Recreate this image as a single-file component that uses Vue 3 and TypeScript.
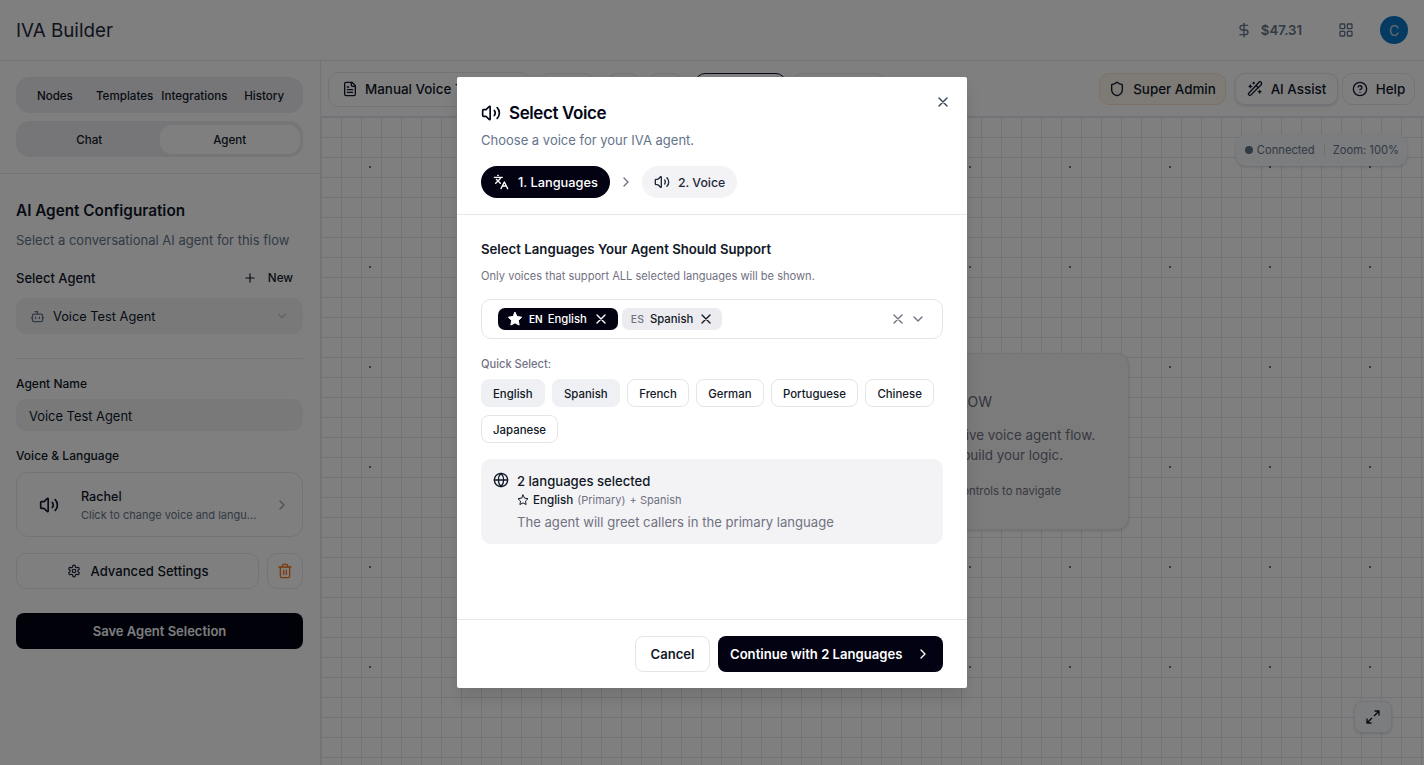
<template>
  <div class="page">
    <header class="topbar">
      <div class="brand">IVA Builder</div>
      <div class="top-right">
        <svg class="ic muted" width="16" height="16" viewBox="0 0 24 24"><line x1="12" y1="2" x2="12" y2="22" /><path d="M17 5H9.5a3.5 3.5 0 0 0 0 7h5a3.5 3.5 0 0 1 0 7H6" /></svg>
        <span class="balance">$47.31</span>
        <svg class="ic grid-ic" width="16" height="16" viewBox="0 0 24 24"><rect x="3" y="3" width="7" height="7" rx="1" /><rect x="14" y="3" width="7" height="7" rx="1" /><rect x="3" y="14" width="7" height="7" rx="1" /><rect x="14" y="14" width="7" height="7" rx="1" /></svg>
        <div class="avatar">C</div>
      </div>
    </header>

    <div class="body">
      <aside class="sidebar">
        <div class="tabs-block">
          <div class="seg seg-four">
            <span v-for="t in mainTabs" :key="t">{{ t }}</span>
          </div>
          <div class="seg seg-two">
            <span>Chat</span>
            <span class="on">Agent</span>
          </div>
        </div>

        <div class="config">
          <h2>AI Agent Configuration</h2>
          <p class="config-sub">Select a conversational AI agent for this flow</p>
          <div class="agent-head">
            <span>Select Agent</span>
            <span class="new">
              <svg class="ic" width="14" height="14" viewBox="0 0 24 24"><path d="M5 12h14M12 5v14" /></svg>
              New
            </span>
          </div>
          <div class="select">
            <svg class="ic" width="15" height="15" viewBox="0 0 24 24"><path d="M12 8V4H8" /><rect x="4" y="8" width="16" height="12" rx="2" /><path d="M2 14h2M20 14h2M15 13v2M9 13v2" /></svg>
            <span>Voice Test Agent</span>
            <svg class="ic chev faint" width="14" height="14" viewBox="0 0 24 24"><path d="m6 9 6 6 6-6" /></svg>
          </div>
          <div class="rule"></div>
          <label>Agent Name</label>
          <div class="name-input">Voice Test Agent</div>
          <label class="voice-label">Voice &amp; Language</label>
          <div class="voice-card">
            <svg class="ic" width="20" height="20" viewBox="0 0 24 24"><path :d="speakerBody" /><path d="M16 9a5 5 0 0 1 0 6M19.400 18.400a9 9 0 0 0 0-12.800" /></svg>
            <div class="voice-text">
              <b>Rachel</b>
              <small>Click to change voice and langu...</small>
            </div>
            <svg class="ic chev" width="16" height="16" viewBox="0 0 24 24"><path d="m9 18 6-6-6-6" /></svg>
          </div>
          <div class="adv-row">
            <div class="adv">
              <svg class="ic" width="14" height="14" viewBox="0 0 24 24"><path d="M12.2 2h-.4a2 2 0 0 0-2 2v.2a2 2 0 0 1-1 1.700l-.4.3a2 2 0 0 1-2 0l-.2-.1a2 2 0 0 0-2.700.7l-.2.4a2 2 0 0 0 .7 2.700l.2.1a2 2 0 0 1 1 1.700v.5a2 2 0 0 1-1 1.800l-.2.1a2 2 0 0 0-.7 2.700l.2.4a2 2 0 0 0 2.700.7l.2-.1a2 2 0 0 1 2 0l.4.3a2 2 0 0 1 1 1.700v.2a2 2 0 0 0 2 2h.4a2 2 0 0 0 2-2v-.2a2 2 0 0 1 1-1.700l.4-.3a2 2 0 0 1 2 0l.2.1a2 2 0 0 0 2.700-.7l.2-.4a2 2 0 0 0-.7-2.700l-.2-.1a2 2 0 0 1-1-1.800v-.5a2 2 0 0 1 1-1.700l.2-.1a2 2 0 0 0 .7-2.700l-.2-.4a2 2 0 0 0-2.700-.7l-.2.1a2 2 0 0 1-2 0l-.4-.3a2 2 0 0 1-1-1.700V4a2 2 0 0 0-2-2z" /><circle cx="12" cy="12" r="3" /></svg>
              Advanced Settings
            </div>
            <div class="trash">
              <svg class="ic" width="16" height="16" viewBox="0 0 24 24"><path d="M3 6h18M19 6v14a2 2 0 0 1-2 2H7a2 2 0 0 1-2-2V6M8 6V4a2 2 0 0 1 2-2h4a2 2 0 0 1 2 2v2M10 11v6M14 11v6" /></svg>
            </div>
          </div>
          <div class="save">Save Agent Selection</div>
        </div>
      </aside>

      <main class="workspace">
        <div class="toolbar">
          <div class="tool manual">
            <svg class="ic" width="16" height="16" viewBox="0 0 24 24"><path d="M15 2H6a2 2 0 0 0-2 2v16a2 2 0 0 0 2 2h12a2 2 0 0 0 2-2V7z" /><path d="M14 2v4a2 2 0 0 0 2 2h4M10 9H8M16 13H8M16 17H8" /></svg>
            Manual Voice Test
          </div>
          <div class="tool t2"></div>
          <div class="tool t3"></div>
          <div class="tool t4"></div>
          <div class="tool t5"></div>
          <div class="tool t6"></div>
          <div class="tool-right">
            <div class="tool admin">
              <svg class="ic" width="16" height="16" viewBox="0 0 24 24"><path d="M20 13c0 5-3.500 7.500-7.700 9a1 1 0 0 1-.6 0C7.500 20.500 4 18 4 13V6a1 1 0 0 1 1-1c2 0 4.500-1.200 6.200-2.700a1.200 1.200 0 0 1 1.600 0C14.500 3.800 17 5 19 5a1 1 0 0 1 1 1z" /></svg>
              Super Admin
            </div>
            <div class="tool assist">
              <svg class="ic" width="16" height="16" viewBox="0 0 24 24"><path d="m21.600 2.400-1.200-1.200a1.200 1.200 0 0 0-1.700 0L2.400 18.700a1.200 1.200 0 0 0 0 1.700l1.200 1.200a1.200 1.200 0 0 0 1.700 0L21.600 5.300a1.200 1.200 0 0 0 0-1.700zM14 7l3 3M5 6v4M19 14v4M10 2v2M7 8H3M21 16h-4M11 3H9" /></svg>
              AI Assist
            </div>
            <div class="tool help">
              <svg class="ic" width="16" height="16" viewBox="0 0 24 24"><circle cx="12" cy="12" r="10" /><path d="M9.100 9a3 3 0 0 1 5.800 1c0 2-3 3-3 3M12 17h.01" /></svg>
              Help
            </div>
          </div>
        </div>

        <div class="canvas">
          <div class="status">
            <i class="dot"></i><span>Connected</span><em></em><span>Zoom: 100%</span>
          </div>
          <div class="welcome">
            <h3>FLOW</h3>
            <p class="w-one">interactive voice agent flow.</p>
            <p class="w-two">then build your logic.</p>
            <small>controls to navigate</small>
          </div>
          <div class="fit">
            <svg class="ic" width="16" height="16" viewBox="0 0 24 24"><path d="M15 3h6v6M21 3l-7 7M3 21l7-7M9 21H3v-6" /></svg>
          </div>
        </div>
      </main>
    </div>

    <div class="scrim">
      <div class="modal">
        <button class="close" type="button">
          <svg class="ic" width="16" height="16" viewBox="0 0 24 24"><path d="M18 6 6 18M6 6l12 12" /></svg>
        </button>
        <div class="m-head">
          <div class="m-title">
            <svg class="ic" width="20" height="20" viewBox="0 0 24 24"><path :d="speakerBody" /><path d="M16 9a5 5 0 0 1 0 6M19.400 18.400a9 9 0 0 0 0-12.800" /></svg>
            Select Voice
          </div>
          <p class="m-sub">Choose a voice for your IVA agent.</p>
          <div class="steps">
            <div class="step active">
              <svg class="ic" width="16" height="16" viewBox="0 0 24 24"><path d="m5 8 6 6M4 14l6-6 2-3M2 5h12M7 2h1M22 22l-5-10-5 10M14 18h6" /></svg>
              1. Languages
            </div>
            <svg class="ic step-arrow" width="16" height="16" viewBox="0 0 24 24"><path d="m9 18 6-6-6-6" /></svg>
            <div class="step next">
              <svg class="ic" width="16" height="16" viewBox="0 0 24 24"><path :d="speakerBody" /><path d="M16 9a5 5 0 0 1 0 6M19.400 18.400a9 9 0 0 0 0-12.800" /></svg>
              2. Voice
            </div>
          </div>
        </div>

        <div class="m-body">
          <h4>Select Languages Your Agent Should Support</h4>
          <p class="hint">Only voices that support ALL selected languages will be shown.</p>
          <div class="multi">
            <span class="chip primary">
              <svg class="ic star-fill" width="16" height="16" viewBox="0 0 24 24"><path :d="starPath" /></svg>
              <b>EN</b><span>English</span>
              <svg class="ic" width="16" height="16" viewBox="0 0 24 24"><path d="M18 6 6 18M6 6l12 12" /></svg>
            </span>
            <span class="chip second">
              <b>ES</b><span>Spanish</span>
              <svg class="ic" width="16" height="16" viewBox="0 0 24 24"><path d="M18 6 6 18M6 6l12 12" /></svg>
            </span>
            <span class="multi-actions">
              <svg class="ic" width="16" height="16" viewBox="0 0 24 24"><path d="M18 6 6 18M6 6l12 12" /></svg>
              <svg class="ic" width="16" height="16" viewBox="0 0 24 24"><path d="m6 9 6 6 6-6" /></svg>
            </span>
          </div>
          <div class="quick-label">Quick Select:</div>
          <div class="quick">
            <span v-for="l in languages" :key="l.name" class="lang" :class="{ picked: l.picked }">{{ l.name }}</span>
          </div>
          <div class="summary">
            <svg class="ic" width="16" height="16" viewBox="0 0 24 24"><circle cx="12" cy="12" r="10" /><path d="M12 2a14.500 14.500 0 0 0 0 20 14.500 14.500 0 0 0 0-20M2 12h20" /></svg>
            <div class="summary-text">
              <strong>2 languages selected</strong>
              <div class="summary-line">
                <svg class="ic" width="12" height="12" viewBox="0 0 24 24"><path :d="starPath" /></svg>
                <b>English</b> <span>(Primary)</span> <span>+ Spanish</span>
              </div>
              <div class="summary-note">The agent will greet callers in the primary language</div>
            </div>
          </div>
        </div>

        <div class="m-foot">
          <button class="cancel" type="button">Cancel</button>
          <button class="continue" type="button">
            Continue with 2 Languages
            <svg class="ic" width="16" height="16" viewBox="0 0 24 24"><path d="m9 18 6-6-6-6" /></svg>
          </button>
        </div>
      </div>
    </div>
  </div>
</template>

<script setup lang="ts">
interface Language {
  name: string
  picked: boolean
}

const mainTabs: string[] = ['Nodes', 'Templates', 'Integrations', 'History']

const speakerBody =
  'M11 4.700a.7.7 0 0 0-1.200-.5L6.400 7.600A1.400 1.400 0 0 1 5.400 8H3a1 1 0 0 0-1 1v6a1 1 0 0 0 1 1h2.400a1.400 1.400 0 0 1 1 .4l3.400 3.400a.7.7 0 0 0 1.200-.5z'

const starPath = 'M12 2l3.100 6.300 6.900 1-5 4.900 1.200 6.900-6.200-3.300-6.200 3.300L7 14.200 2 9.300l6.900-1z'

const languages: Language[] = [
  { name: 'English', picked: true },
  { name: 'Spanish', picked: true },
  { name: 'French', picked: false },
  { name: 'German', picked: false },
  { name: 'Portuguese', picked: false },
  { name: 'Chinese', picked: false },
  { name: 'Japanese', picked: false }
]
</script>

<style>
html,
body {
  margin: 0;
  background: #fff;
}
</style>

<style scoped>
* {
  box-sizing: border-box;
}

.page {
  position: relative;
  width: 1424px;
  height: 765px;
  overflow: hidden;
  display: flex;
  flex-direction: column;
  font-family: Inter, 'Liberation Sans', sans-serif;
  color: #0f172a;
  background: #fff;
}

.ic {
  fill: none;
  stroke: currentColor;
  stroke-width: 2;
  stroke-linecap: round;
  stroke-linejoin: round;
  flex: none;
}

.topbar {
  height: 61px;
  flex: none;
  display: flex;
  align-items: center;
  justify-content: space-between;
  padding: 0 16px;
  border-bottom: 1px solid #e2e8f0;
}

.brand {
  margin-top: 1px;
  font-size: 18.8px;
  color: #1e293b;
}

.top-right {
  display: flex;
  align-items: center;
}

.muted {
  color: #64748b;
}

.balance {
  margin-left: 9px;
  font-size: 13.2px;
  font-weight: 600;
  color: #64748b;
}

.grid-ic {
  color: #64748b;
  margin-left: 36px;
}

.avatar {
  width: 28px;
  height: 28px;
  margin-left: 26px;
  border-radius: 50%;
  background: #0b77c5;
  color: #cbd5e1;
  font-size: 14px;
  display: flex;
  align-items: center;
  justify-content: center;
}

.body {
  flex: 1;
  display: flex;
  min-height: 0;
}

.sidebar {
  width: 321px;
  flex: none;
  border-right: 1px solid #e2e8f0;
}

.tabs-block {
  padding: 16px 17px 16px 16px;
  display: flex;
  flex-direction: column;
  gap: 8px;
  border-bottom: 1px solid #e2e8f0;
}

.seg {
  height: 36px;
  border-radius: 14px;
  background: #ececf0;
  display: grid;
  align-items: center;
  font-size: 11.6px;
  font-weight: 500;
  text-align: center;
}

.seg-four {
  grid-template-columns: repeat(4, 1fr);
  padding: 2px 4px 0;
}

.seg-two {
  grid-template-columns: 1fr 1fr;
  padding: 4px 3px;
}

.seg-two span {
  padding-top: 1px;
  line-height: 28px;
}

.seg-two .on {
  background: #fff;
  border-radius: 12px;
}

.config {
  padding: 26px 17px 0 16px;
}

h2 {
  margin: 0;
  font-size: 15.3px;
  line-height: 22px;
  font-weight: 600;
}

.config-sub {
  margin: 8px 0 0;
  font-size: 13px;
  line-height: 20px;
  color: #64748b;
}

.agent-head {
  margin-top: 14px;
  display: flex;
  align-items: center;
  justify-content: space-between;
  height: 28px;
  font-size: 13px;
  font-weight: 500;
}

.new {
  display: flex;
  align-items: center;
  gap: 11px;
  font-size: 11.7px;
  padding-right: 10px;
}

.select {
  margin-top: 6px;
  height: 36px;
  border-radius: 10px;
  background: #f3f3f5;
  display: flex;
  align-items: center;
  padding: 0 14px;
  gap: 8px;
  font-size: 12.8px;
}

.select .ic:first-child {
  color: #64748b;
}

.chev {
  margin-left: auto;
  color: #94a3b8;
}

.faint {
  opacity: 0.6;
}

.rule {
  margin-top: 24px;
  height: 1px;
  background: #e2e8f0;
}

label {
  display: block;
  margin-top: 17px;
  font-size: 12px;
  line-height: 16px;
  font-weight: 500;
}

.name-input {
  margin-top: 7px;
  height: 32px;
  border-radius: 10px;
  background: #f3f3f5;
  padding: 2px 13px 0;
  display: flex;
  align-items: center;
  font-size: 12.9px;
}

.voice-label {
  margin-top: 17px;
}

.voice-card {
  margin-top: 8px;
  height: 65px;
  border: 1px solid #e2e8f0;
  border-radius: 12px;
  display: flex;
  align-items: center;
  padding: 0 12px 0 22px;
  gap: 22px;
}

.voice-text {
  display: flex;
  flex-direction: column;
  gap: 3px;
  min-width: 0;
  padding-top: 2px;
}

.voice-text b {
  font-size: 12.6px;
  line-height: 17px;
  font-weight: 500;
}

.voice-text small {
  font-size: 11px;
  line-height: 15px;
  color: #64748b;
  white-space: nowrap;
}

.adv-row {
  margin-top: 16px;
  display: flex;
  gap: 8px;
}

.adv,
.trash {
  height: 36px;
  border: 1px solid #e2e8f0;
  border-radius: 10px;
  display: flex;
  align-items: center;
  justify-content: center;
}

.adv {
  flex: 1;
  gap: 10px;
  font-size: 13.1px;
  font-weight: 500;
}

.trash {
  width: 36px;
  color: #f97316;
}

.save {
  margin-top: 24px;
  height: 36px;
  border-radius: 8px;
  background: #030213;
  color: #f8fafc;
  font-size: 13px;
  font-weight: 600;
  display: flex;
  align-items: center;
  justify-content: center;
}

.workspace {
  flex: 1;
  display: flex;
  flex-direction: column;
  min-width: 0;
}

.toolbar {
  height: 56px;
  flex: none;
  display: flex;
  align-items: center;
  padding: 1px 9px 0 7px;
  border-bottom: 1px solid #e2e8f0;
}

.tool {
  height: 32px;
  border: 1px solid #e2e8f0;
  border-radius: 10px;
  display: flex;
  align-items: center;
  gap: 7px;
  font-size: 13.4px;
  font-weight: 500;
  white-space: nowrap;
}

.manual {
  width: 203px;
  height: 35px;
  padding-left: 13px;
}

.t2 {
  width: 55px;
  margin-left: 9px;
}

.t3 {
  width: 33px;
  margin-left: 12px;
}

.t4 {
  width: 35px;
  margin-left: 8px;
}

.t5 {
  width: 91px;
  margin-left: 12px;
  border-color: #0f172a;
}

.t6 {
  width: 93px;
  margin-left: 6px;
}

.tool-right {
  margin-left: auto;
  display: flex;
}

.admin,
.assist,
.help {
  justify-content: center;
  gap: 8px;
}

.admin {
  width: 127px;
  background: #fdf6ef;
  border-color: #fde2c4;
}

.assist {
  width: 103px;
  margin-left: 9px;
  box-shadow: 0 1px 3px rgba(15, 23, 42, 0.18);
}

.help {
  width: 73px;
  margin-left: 4px;
}

.canvas {
  position: relative;
  flex: 1;
  background-color: #fff;
  background-image:
    radial-gradient(circle at 50px 50px, #777 1px, transparent 1.4px),
    linear-gradient(#e4e4ef 1px, transparent 1px),
    linear-gradient(90deg, #e4e4ef 1px, transparent 1px);
  background-size: 100px 100px, 20px 20px, 20px 20px;
  background-position: -1px 0, 0 0, 0 0;
}

.status {
  position: absolute;
  top: 17px;
  right: 17px;
  height: 32px;
  padding: 0 8px 0 9px;
  display: flex;
  align-items: center;
  gap: 4px;
  background: #f8fafc;
  border-radius: 10px;
  box-shadow: 0 1px 3px rgba(15, 23, 42, 0.18);
  font-size: 11.2px;
  color: #64748b;
}

.dot {
  width: 8px;
  height: 8px;
  border-radius: 50%;
  background: #64748b;
}

.status em {
  width: 1px;
  height: 12px;
  background: #dfe3ea;
  margin: 0 4px 0 5px;
}

/* centred on the canvas, most of it sits behind the dialog */
.welcome {
  position: absolute;
  right: 295px;
  top: 236px;
  width: 511px;
  height: 177px;
  padding-top: 38px;
  background: #f6f6f7;
  border: 1px solid #e2e8f0;
  border-radius: 12px;
  box-shadow: 0 1px 3px rgba(15, 23, 42, 0.15);
  color: #717182;
  white-space: nowrap;
  text-align: right;
}

.welcome h3 {
  margin: 0 136px 0 0;
  font-size: 14px;
  line-height: 20px;
  font-weight: 400;
  color: #6a6a75;
}

.welcome p {
  margin: 0;
  font-size: 13.4px;
  line-height: 20px;
}

.w-one {
  margin-top: 13px !important;
  padding-right: 33px;
}

.w-two {
  padding-right: 65px;
}

.welcome small {
  display: block;
  margin-top: 19px;
  padding-right: 67px;
  font-size: 11.3px;
  line-height: 14px;
}

.fit {
  position: absolute;
  right: 32px;
  bottom: 32px;
  width: 38px;
  height: 32px;
  border: 1px solid #e2e8f0;
  border-radius: 8px;
  background: #f8fafc;
  box-shadow: 0 1px 3px rgba(15, 23, 42, 0.15);
  display: flex;
  align-items: center;
  justify-content: center;
}

.scrim {
  position: absolute;
  inset: 0;
  background: rgba(0, 0, 0, 0.5);
  display: flex;
  align-items: flex-start;
  justify-content: center;
  padding-top: 77px;
}

.modal {
  position: relative;
  width: 510px;
  height: 611px;
  background: #fff;
  box-shadow: 0 10px 15px rgba(0, 0, 0, 0.1);
  border-radius: 2px;
  display: flex;
  flex-direction: column;
}

.close {
  position: absolute;
  top: 17px;
  right: 16px;
  width: 16px;
  height: 16px;
  padding: 0;
  border: 0;
  background: none;
  color: #334155;
}

.m-head {
  padding: 25px 24px 16px;
  border-bottom: 1px solid #e5e7eb;
}

.m-title {
  display: flex;
  align-items: center;
  gap: 8px;
  font-size: 17px;
  letter-spacing: -0.4px;
  line-height: 22px;
  font-weight: 600;
  color: #020617;
}

.m-sub {
  margin: 6px 0 0;
  font-size: 13px;
  line-height: 20px;
  color: #64748b;
}

.steps {
  margin-top: 16px;
  display: flex;
  align-items: center;
  gap: 8px;
}

.step {
  height: 32px;
  display: flex;
  align-items: center;
  gap: 9px;
  padding: 0 12px;
  border-radius: 16px;
  background: #f3f3f5;
  font-size: 12.8px;
  font-weight: 500;
  color: #1e293b;
}

.step.active {
  background: #030213;
  color: #fff;
}

.step.next {
  gap: 8px;
  font-size: 12.3px;
}

.step-arrow {
  color: #717182;
}

.m-body {
  flex: 1;
  padding: 25px 24px 0;
}

h4 {
  margin: 0;
  font-size: 13.2px;
  line-height: 18px;
  font-weight: 600;
  color: #111827;
}

.hint {
  margin: 10px 0 0;
  font-size: 11.1px;
  line-height: 16px;
  color: #717182;
}

.multi {
  margin-top: 15px;
  height: 40px;
  border: 1px solid #e5e5e8;
  border-radius: 10px;
  display: flex;
  align-items: center;
  gap: 4px;
  padding: 0 16px;
}

.chip {
  height: 22px;
  display: flex;
  align-items: center;
  gap: 5px;
  padding: 0 4px 0 9px;
  border-radius: 7px;
  background: #ececf0;
  font-size: 11.3px;
  font-weight: 500;
  color: #111827;
}

.chip b {
  font-size: 10px;
  font-weight: 500;
  color: #717182;
}

.chip .ic {
  margin-left: 1px;
  margin-right: 5px;
}

.chip.primary {
  background: #030213;
  color: #fff;
}

.chip.primary b {
  color: #fff;
  font-weight: 600;
}

.chip.second b {
  font-size: 10.5px;
  margin-right: 1px;
}

.chip.second .ic {
  margin-left: 0;
  margin-right: 4px;
}

.chip .star-fill {
  margin: 0 1px 0 0;
  fill: #fff;
  stroke-width: 1.5;
}

.multi-actions {
  margin-left: auto;
  display: flex;
  align-items: center;
  gap: 4px;
  color: #717182;
}

.quick-label {
  margin-top: 17px;
  font-size: 11.1px;
  line-height: 16px;
  font-weight: 500;
  color: #717182;
}

.quick {
  margin-top: 7px;
  display: flex;
  flex-wrap: wrap;
  gap: 8px 7.5px;
}

.lang {
  height: 28px;
  padding: 1px 11px 0;
  display: flex;
  align-items: center;
  border: 1px solid #e5e5e8;
  border-radius: 8px;
  font-size: 11.4px;
  font-weight: 500;
  color: #111827;
}

.lang.picked {
  background: #eff0f3;
  border-color: #eff0f3;
}

.summary {
  margin-top: 16px;
  height: 85px;
  border-radius: 10px;
  background: #f3f3f5;
  display: flex;
  gap: 8px;
  padding: 13px 12px 0;
}

.summary-text strong {
  display: block;
  font-size: 13.1px;
  line-height: 19px;
  font-weight: 500;
  color: #111827;
}

.summary-line {
  margin-top: 1px;
  display: flex;
  align-items: center;
  gap: 4px;
  font-size: 11px;
  line-height: 16px;
  color: #717182;
}

.summary-line .ic {
  color: #111827;
}

.summary-line b {
  font-size: 11.6px;
  font-weight: 500;
  color: #111827;
}

.summary-note {
  margin-top: 5px;
  font-size: 13.1px;
  line-height: 18px;
  color: #717182;
}

.m-foot {
  height: 69px;
  border-top: 1px solid #e5e7eb;
  display: flex;
  align-items: flex-start;
  justify-content: flex-end;
  gap: 8px;
  padding: 16px 24px 0;
}

.m-foot button {
  height: 36px;
  border-radius: 8px;
  font-family: inherit;
  font-size: 13.1px;
  font-weight: 600;
  display: flex;
  align-items: center;
}

.cancel {
  width: 75px;
  justify-content: center;
  background: #fff;
  border: 1px solid #e5e5e8;
  color: #111827;
}

.continue {
  width: 225px;
  padding: 0 12px;
  justify-content: space-between;
  background: #030213;
  border: 0;
  color: #fff;
}
</style>
